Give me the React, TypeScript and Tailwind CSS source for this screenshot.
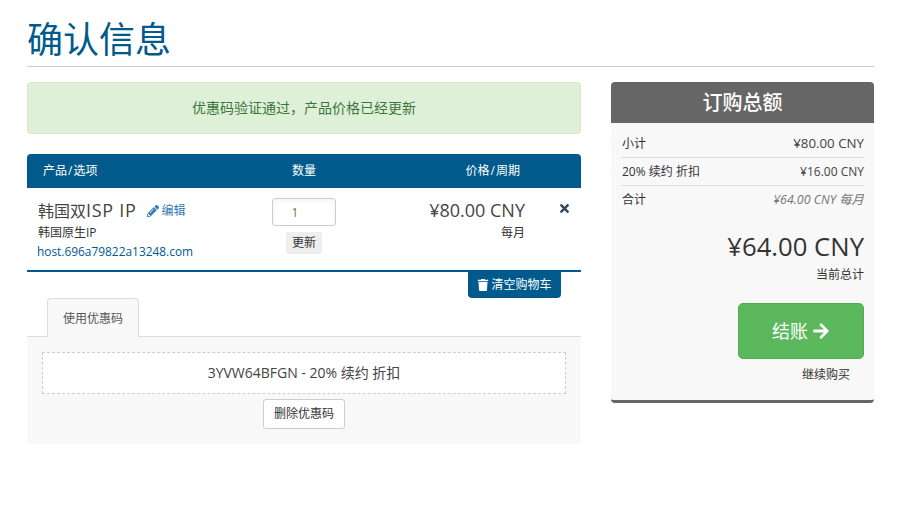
import { FaArrowRight, FaPencilAlt, FaTimes, FaTrash } from 'react-icons/fa';

const SummaryRow = ({ label, value, last }: { label: string; value: React.ReactNode; last?: boolean }) => (
  <div className={`flex justify-between items-center h-[28px] text-[12px] ${last ? '' : 'border-b border-[#dddddd]'}`}>
    <span className="pl-[1px] text-[#333333]">{label}</span>
    {value}
  </div>
);

const App = () => {
  return (
    <div
      className="w-[917px] h-[506px] bg-white overflow-hidden px-[27px] pr-[43px] text-[#333333]"
      style={{ fontFamily: '"Open Sans", "Noto Sans CJK SC", sans-serif' }}
    >
      <div className="h-[67px] border-b border-[#cccccc] pt-[15px]">
        <h1 className="text-[36px] leading-[50px] text-[#005a8c] font-normal">确认信息</h1>
      </div>

      <div className="flex justify-between pt-[15px]">
        <div className="w-[554px]">
          <div className="h-[52px] rounded-[4px] border border-[#d6e9c6] bg-[#dff0d8] text-[#3c763d] text-[14px] flex items-center justify-center pb-[1px]">
            优惠码验证通过，产品价格已经更新
          </div>

          <div className="mt-[20px] h-[34px] rounded-t-[4px] bg-[#005a8c] text-white text-[12px] flex items-center">
            <div className="w-[227px] pl-[16px]">产品<span className="px-[1px]">/</span>选项</div>
            <div className="w-[100px] text-center">数量</div>
            <div className="w-[166px] text-right">价格<span className="px-[1px]">/</span>周期</div>
          </div>

          <div className="h-[84px] border-b-2 border-[#005a8c] flex">
            <div className="w-[227px] pl-[11px] pt-[10px]">
              <div className="flex items-center h-[25px]">
                <span className="text-[16px] text-[#444444]">韩国双</span>
                <span className="text-[18px] tracking-[0.7px] text-[#444444]">ISP IP</span>
                <FaPencilAlt className="ml-[11px] text-[#337ab7] text-[12px]" />
                <span className="ml-[2px] text-[12px] text-[#337ab7]">编辑</span>
              </div>
              <div className="text-[12px] leading-[18px] mt-[1px]">韩国原生IP</div>
              <div className="-ml-[1px] text-[11.9px] leading-[18px] text-[#005a8c]">host.696a79822a13248.com</div>
            </div>
            <div className="w-[100px] flex flex-col items-center pt-[10px]">
              <input
                readOnly
                value="1"
                className="w-[64px] h-[28px] rounded-[3px] border border-[#cccccc] text-center pr-[18px] text-[12px] text-[#8a6d3b] shadow-inner"
              />
              <button className="mt-[6px] h-[22px] w-[36px] rounded-[3px] bg-[#eeeeee] text-[12px] text-[#333333]">更新</button>
            </div>
            <div className="w-[171px] flex flex-col items-end pt-[10px]">
              <span className="text-[18px] leading-[25px] text-[#444444]">¥80.00 CNY</span>
              <span className="text-[12px] leading-[18px] mt-[1px]">每月</span>
            </div>
            <div className="flex-1 pl-[33px] pt-[14px]">
              <FaTimes className="text-[#33475b] text-[13px]" />
            </div>
          </div>

          <div className="flex justify-end pr-[20px]">
            <button className="h-[26px] w-[93px] rounded-b-[4px] bg-[#005a8c] text-white text-[12px] flex items-center justify-center gap-[2px]">
              <FaTrash className="text-[12px]" />
              清空购物车
            </button>
          </div>

          <div className="h-[39px] border-b border-[#dddddd] pl-[20px]">
            <div className="h-[39px] w-[92px] rounded-t-[4px] border border-b-0 border-[#dddddd] bg-[#f8f8f8] text-[12px] text-[#555555] flex items-center justify-center pt-[2px]">
              使用优惠码
            </div>
          </div>

          <div className="h-[107px] bg-[#f8f8f8] px-[15px] pt-[15px]">
            <div className="h-[42px] border border-dashed border-[#cccccc] bg-white text-[14px] text-[#444444] flex items-center justify-center pb-[2px]">
              3YVW64BFGN - 20% 续约 折扣
            </div>
            <div className="flex justify-center mt-[5px]">
              <button className="h-[30px] w-[82px] rounded-[3px] border border-[#cccccc] bg-white text-[12px]">删除优惠码</button>
            </div>
          </div>
        </div>

        <div className="w-[263px]">
          <div className="h-[41px] rounded-t-[4px] bg-[#666666] text-white text-[20px] font-medium flex items-center justify-center">
            订购总额
          </div>
          <div className="h-[280px] rounded-b-[4px] border-b-[3px] border-[#666666] bg-[#f8f8f8] px-[10px] pt-[7px]">
            <SummaryRow label="小计" value={<span className="text-[13.3px] text-[#444444]">¥80.00 CNY</span>} />
            <SummaryRow label="20% 续约 折扣" value={<span className="text-[#444444]">¥16.00 CNY</span>} />
            <SummaryRow label="合计" last value={<span className="italic text-[12.4px] text-[#777777]">¥64.00 CNY 每月</span>} />
            <div className="text-right mt-[16px] text-[25.7px] leading-[34px] text-[#333333]">¥64.00 CNY</div>
            <div className="text-right text-[12px] leading-[18px] mt-[2px]">当前总计</div>
            <div className="flex justify-end mt-[19px]">
              <button className="h-[56px] w-[126px] rounded-[5px] border border-[#4cae4c] bg-[#5cb85c] text-white text-[18px] flex items-center justify-center gap-[4px]">
                结账
                <FaArrowRight className="text-[18px]" />
              </button>
            </div>
            <div className="text-right text-[12px] leading-[18px] pr-[14px] mt-[7px]">继续购买</div>
          </div>
        </div>
      </div>
    </div>
  );
};

export default App;
